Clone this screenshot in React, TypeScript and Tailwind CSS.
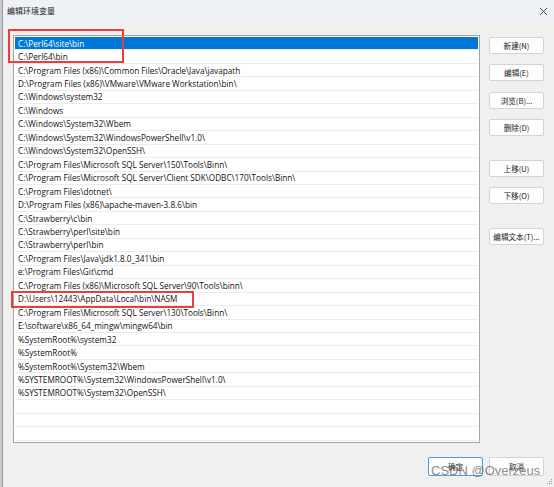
const paths = [
  'C:\\Perl64\\site\\bin',
  'C:\\Perl64\\bin',
  'C:\\Program Files (x86)\\Common Files\\Oracle\\Java\\javapath',
  'D:\\Program Files (x86)\\VMware\\VMware Workstation\\bin\\',
  'C:\\Windows\\system32',
  'C:\\Windows',
  'C:\\Windows\\System32\\Wbem',
  'C:\\Windows\\System32\\WindowsPowerShell\\v1.0\\',
  'C:\\Windows\\System32\\OpenSSH\\',
  'C:\\Program Files\\Microsoft SQL Server\\150\\Tools\\Binn\\',
  'C:\\Program Files\\Microsoft SQL Server\\Client SDK\\ODBC\\170\\Tools\\Binn\\',
  'C:\\Program Files\\dotnet\\',
  'D:\\Program Files (x86)\\apache-maven-3.8.6\\bin',
  'C:\\Strawberry\\c\\bin',
  'C:\\Strawberry\\perl\\site\\bin',
  'C:\\Strawberry\\perl\\bin',
  'C:\\Program Files\\Java\\jdk1.8.0_341\\bin',
  'e:\\Program Files\\Git\\cmd',
  'C:\\Program Files (x86)\\Microsoft SQL Server\\90\\Tools\\binn\\',
  'D:\\Users\\12443\\AppData\\Local\\bin\\NASM',
  'C:\\Program Files\\Microsoft SQL Server\\130\\Tools\\Binn\\',
  'E:\\software\\x86_64_mingw\\mingw64\\bin',
  '%SystemRoot%\\system32',
  '%SystemRoot%',
  '%SystemRoot%\\System32\\Wbem',
  '%SYSTEMROOT%\\System32\\WindowsPowerShell\\v1.0\\',
  '%SYSTEMROOT%\\System32\\OpenSSH\\',
  '',
  '',
  '',
];

const FONT = "font-['Segoe_UI','Open_Sans','Noto_Sans_CJK_SC',sans-serif]";
const CJK = "font-['Noto_Sans_CJK_SC',sans-serif]";

function SideButton({ label, className = '' }: { label: string; className?: string }) {
  return (
    <div
      className={`h-[17px] w-[55px] shrink-0 flex items-center justify-center rounded-[2px] border border-[#d3d3d3] bg-[#fdfdfd] text-[7.6px] text-[#1b1b1b] ${CJK} ${className}`}
    >
      {label}
    </div>
  );
}

export default function App() {
  return (
    <div className="relative flex w-[554px] h-[487px] overflow-hidden bg-[#f0f0f0]">
      {/* edge of the window behind */}
      <div className="w-[3px] h-full bg-[#c9c9c9] border-r border-[#9a9a9a]" />

      <div className="flex flex-1 flex-col">
        {/* title bar */}
        <div className="h-[22px] flex items-center justify-between bg-[#eef1f6] pl-[4px] pr-[6px]">
          <span className={`text-[8px] text-[#1a1a1a] ${CJK}`}>编辑环境变量</span>
          <svg width="9" height="9" viewBox="0 0 9 9" className="mt-[1px]">
            <path d="M1 1L8 8M8 1L1 8" stroke="#444" strokeWidth="1" />
          </svg>
        </div>

        <div className="flex flex-1 flex-col pl-[10px] pr-[10px] pt-[13px]">
          <div className="flex">
            {/* path list */}
            <div className="w-[467px] h-[408px] border border-[#a5a5a5] bg-white p-[1px] overflow-hidden">
              {paths.map((p, i) => (
                <div
                  key={i}
                  className={`h-[13.46px] flex items-center pl-[3px] pt-[1px] text-[8.2px] leading-none whitespace-nowrap border-b border-[#ececec] ${FONT} ${
                    i === 0 ? 'bg-[#0078d7] text-white' : 'text-[#111]'
                  }`}
                >
                  {p}
                </div>
              ))}
            </div>

            {/* action buttons */}
            <div className="ml-[9px] flex flex-col pt-[2px]">
              <SideButton label="新建(N)" />
              <SideButton label="编辑(E)" className="mt-[10px]" />
              <SideButton label="浏览(B)..." className="mt-[11px]" />
              <SideButton label="删除(D)" className="mt-[10px]" />
              <SideButton label="上移(U)" className="mt-[24px]" />
              <SideButton label="下移(O)" className="mt-[10px]" />
              <SideButton label="编辑文本(T)..." className="mt-[24px]" />
            </div>
          </div>

          {/* dialog buttons */}
          <div className="mt-[14px] flex justify-end gap-[6px]">
            <div
              className={`h-[19px] w-[55px] flex items-center justify-center rounded-[2px] border border-[#4c9be3] bg-[#fdfdfd] text-[7.6px] text-[#1b1b1b] ${CJK}`}
            >
              确定
            </div>
            <div
              className={`h-[19px] w-[55px] flex items-center justify-center rounded-[2px] border border-[#d3d3d3] bg-[#fdfdfd] text-[7.6px] text-[#1b1b1b] ${CJK}`}
            >
              取消
            </div>
          </div>
        </div>
      </div>

      {/* red annotation boxes */}
      <div className="absolute left-[8px] top-[29px] w-[116px] h-[34px] border-2 border-[#ee3b3b]" />
      <div className="absolute left-[11px] top-[291px] w-[183px] h-[17px] border-2 border-[#ee3b3b]" />

      {/* watermark */}
      <div className="absolute left-[431px] top-[464px] text-[13px] leading-none text-[#6e6e6e]/80 font-['Liberation_Sans',sans-serif]">
        CSDN @Overzeus
      </div>

      {/* resize grip */}
      <svg width="6" height="6" viewBox="0 0 6 6" className="absolute right-[1px] bottom-[2px]">
        <rect x="4" y="0" width="1" height="1" fill="#9a9a9a" />
        <rect x="2" y="2" width="1" height="1" fill="#9a9a9a" />
        <rect x="4" y="2" width="1" height="1" fill="#9a9a9a" />
        <rect x="0" y="4" width="1" height="1" fill="#9a9a9a" />
        <rect x="2" y="4" width="1" height="1" fill="#9a9a9a" />
        <rect x="4" y="4" width="1" height="1" fill="#9a9a9a" />
      </svg>
    </div>
  );
}
